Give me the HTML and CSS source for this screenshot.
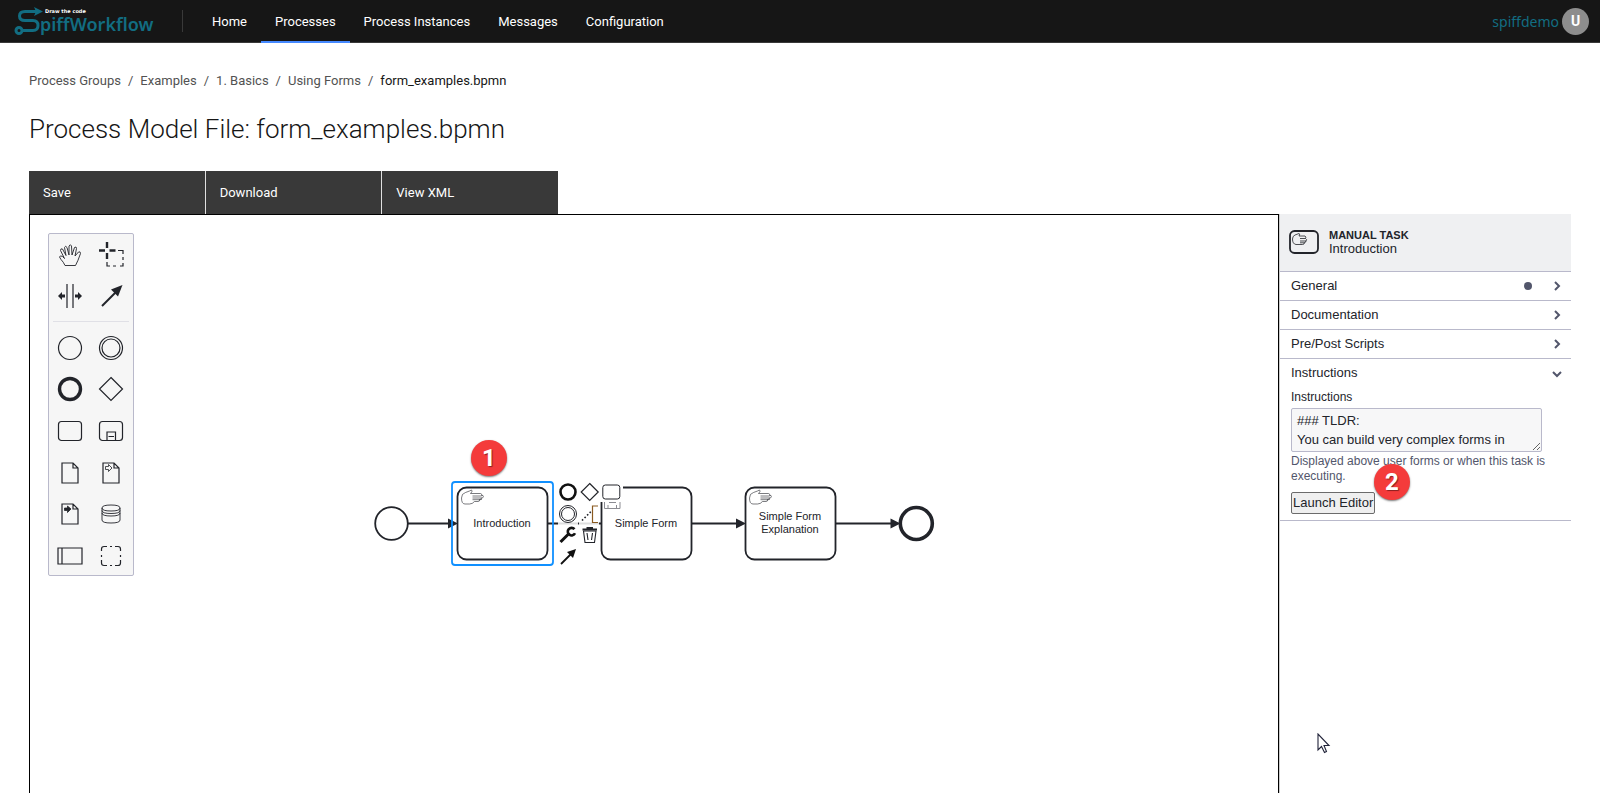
FILE: index.html
```
<!DOCTYPE html>
<html lang="en">
<head>
<meta charset="utf-8">
<title>SpiffWorkflow - form_examples.bpmn</title>
<link rel="stylesheet" href="styles.css">
</head>
<body>
<header class="topbar">
  <a class="logo" href="#" aria-label="SpiffWorkflow">
    <svg width="144" height="36" viewBox="14 3 144 36">
      <g fill="none" stroke="#126d82" stroke-width="3">
        <path d="M36 11.500H25Q19.500 11.500 19.500 16T25 20.500H33Q38 20.500 38 25.500T33 30.500H23"/>
        <circle cx="19" cy="30.500" r="3"/>
      </g>
      <path d="M34 7l9 4.500-9 4.500 2-4.500z" fill="#126d82"/>
      <text class="logo-tag" x="45" y="13">Draw the code</text>
      <text class="logo-name" x="40" y="31">piffWorkflow</text>
    </svg>
  </a>
  <nav class="nav">
    <a href="#">Home</a>
    <a href="#" class="active" aria-current="page">Processes</a>
    <a href="#">Process Instances</a>
    <a href="#">Messages</a>
    <a href="#">Configuration</a>
  </nav>
  <div class="user"><span class="user-name">spiffdemo</span><button class="avatar" type="button">U</button></div>
</header>
<main class="page">
  <nav class="crumbs" aria-label="Breadcrumb">
    <a href="#">Process Groups</a><span>/</span><a href="#">Examples</a><span>/</span><a href="#">1. Basics</a><span>/</span><a href="#">Using Forms</a><span>/</span><b>form_examples.bpmn</b>
  </nav>
  <h1 class="title">Process Model File: form_examples.bpmn</h1>
  <div class="actions">
    <button type="button">Save</button>
    <button type="button">Download</button>
    <button type="button">View XML</button>
  </div>
  <div class="editor">
    <section class="canvas" aria-label="Diagram">
      <svg class="diagram" width="960" height="400" viewBox="30 215 960 400">
        <defs>
          <symbol id="hand" viewBox="0 0 23 15" overflow="visible">
            <path d="M1 8.500Q1 4 5 3L9 1.500Q11 0 11.500 1T10 4H20Q22 4.500 21 6H22.500Q23.500 7 22 8.500H20.500L21 10H19Q19.500 12 17.500 12H14Q12 14.500 9 14.500H4.500Q1 14.500 1 8.500M12 6.500H21M12 8.500H21M12 10.200H20" fill="none" stroke="#22242a" stroke-width=".6"/>
          </symbol>
        </defs>
        <g fill="#fff" stroke="#22242a" stroke-width="1.800">
          <path d="M408 523.500H450M548 523.500H601M692 523.500H738M836 523.500H893"/>
          <circle cx="391.500" cy="523.500" r="16.300"/>
          <rect x="457.500" y="487.500" width="90" height="72" rx="9"/>
          <rect x="601.500" y="487.500" width="90" height="72" rx="9"/>
          <rect x="745.500" y="487.500" width="90" height="72" rx="9"/>
          <circle cx="916.300" cy="523.500" r="16" stroke-width="3.600"/>
        </g>
        <g fill="#22242a">
          <path d="M448 518.500L458 523.500L448 528.500z"/>
          <path d="M736 518.500L746 523.500L736 528.500z"/>
          <path d="M890.500 518.500L900.500 523.500L890.500 528.500z"/>
        </g>
        <use href="#hand" x="460.500" y="489.500" width="23" height="15"/>
        <use href="#hand" x="748.500" y="489.500" width="23" height="15"/>
        <rect x="452" y="482" width="101" height="83" rx="3" fill="none" stroke="#1090ff" stroke-width="1.800"/>
        <g class="task-label">
          <text x="502" y="527">Introduction</text>
          <text x="646" y="527">Simple Form</text>
          <text x="790" y="520">Simple Form</text>
          <text x="790" y="533">Explanation</text>
        </g>
        <g fill="#fff" fill-opacity=".85">
          <rect x="558" y="482" width="20" height="64"/>
          <rect x="579" y="482" width="22" height="20"/>
          <rect x="600" y="482" width="23" height="20" fill-opacity="1"/>
          <rect x="579" y="504" width="20" height="42"/>
        </g>
        <path d="M604.500 502V508.500H620V502M608 508.500V505M616.500 508.500V505M609 502.500H616" fill="none" stroke="#8b8c92" stroke-width="1"/>
        <g fill="none" stroke="#22242a" stroke-width="1.200">
          <circle cx="568" cy="492" r="7.500" stroke="#111" stroke-width="2.600"/>
          <path d="M589.700 483.500L598.200 492L589.700 500.500L581.200 492z"/>
          <rect x="602.800" y="485" width="17" height="14" rx="2.500" stroke-width="1"/>
          <circle cx="568" cy="514" r="8.500" stroke-width="1"/>
          <circle cx="568" cy="514" r="6.500" stroke-width="1"/>
          <path d="M598 506H592.500V522.500H598" stroke="#8a5a20"/>
          <path d="M582 520.500L591.500 511" stroke-width="1.600" stroke-dasharray="1.600 2"/>
          <path d="M583.500 531L585 542.500H594.500L596 531zM587 533L588 540M592.500 533L591.500 540" stroke-width="1.100"/>
          <path d="M582.500 529.500H597M586.500 528H593" stroke-width="1.800"/>
          <path d="M561 564L572 553" stroke="#111" stroke-width="1.800"/>
        </g>
        <path d="M576 549L573 558L567 552z" fill="#111"/>
        <path d="M560.500 542L569.500 533" stroke="#111" stroke-width="3"/>
        <path d="M574.500 529.200A3.800 3.800 0 1 0 575 533.300" fill="none" stroke="#111" stroke-width="2.600"/>
      </svg>
      <span class="badge badge-one">1</span>
      <div class="palette">
        <div class="group">
          <button type="button" aria-label="Hand tool"><svg class="thin" viewBox="0 0 26 26"><path d="M8 23.500Q6.500 20 4 17.500L2.500 15Q3 13 5.500 14.500L7.500 16.500L3.500 8.500Q3.500 6 5.500 7L9 13.500L7.500 5.500Q8.500 3 10 5.500L12 13L12 4Q13.500 1.500 14.500 4L15 13L17.500 5.500Q19.500 4 19.500 6.500L18 14L21.500 10Q23.500 9 23.500 11.500Q21 19 18.500 23.500z"/></svg></button>
          <button type="button" aria-label="Lasso tool"><svg viewBox="0 0 26 26"><path d="M9 0V6M9 11V17M1 8.500H7M11.500 8.500H17.500" stroke-width="2.400"/><path d="M20 8.500H25V12M25 15V18M25 21V24H22M18 24H15M12 24H9V20" stroke-width="1.200"/></svg></button>
          <button type="button" aria-label="Space tool"><svg viewBox="0 0 26 26"><path d="M10 1V25M16 1V25"/><path d="M4 13H8M18 13H22" stroke-width="3"/><path d="M1 13L5 9V17zM25 13L21 9V17z" fill="#22242a" stroke="none"/></svg></button>
          <button type="button" aria-label="Connect tool"><svg viewBox="0 0 26 26"><path d="M4 23L18 9" stroke-width="2"/><path d="M24.500 2L20 13.500L13 6.500z" fill="#22242a" stroke="none"/></svg></button>
        </div>
        <hr>
        <div class="group shapes">
          <button type="button" aria-label="Start event"><svg viewBox="0 0 26 26"><circle cx="13" cy="13" r="11.500"/></svg></button>
          <button type="button" aria-label="Intermediate event"><svg viewBox="0 0 26 26"><circle cx="13" cy="13" r="11.500"/><circle cx="13" cy="13" r="9"/></svg></button>
          <button type="button" aria-label="End event"><svg viewBox="0 0 26 26"><circle cx="13" cy="13" r="10.500" stroke-width="3.400"/></svg></button>
          <button type="button" aria-label="Gateway"><svg viewBox="0 0 26 26"><path d="M13 1.500L24.500 13L13 24.500L1.500 13z"/></svg></button>
          <button type="button" aria-label="Task"><svg viewBox="0 0 26 26"><rect x="1.500" y="3.500" width="23" height="19" rx="3"/></svg></button>
          <button type="button" aria-label="Sub-process"><svg viewBox="0 0 26 26"><rect x="1.500" y="3.500" width="23" height="19" rx="3"/><path d="M9 22V14H17.500V22M10.500 18.500H16"/></svg></button>
          <button type="button" aria-label="Data object"><svg viewBox="0 0 26 26"><path d="M5 3H16L21 8V23H5zM16 3V8H21"/></svg></button>
          <button type="button" aria-label="Data input"><svg viewBox="0 0 26 26"><path d="M5 3H16L21 8V23H5zM16 3V8H21"/><path d="M7.500 6.500H10.500V4.500L14 8L10.500 11.500V9.500H7.500z" stroke-width=".8"/></svg></button>
          <button type="button" aria-label="Data output"><svg viewBox="0 0 26 26"><path d="M5 3H16L21 8V23H5zM16 3V8H21"/><path d="M7.500 7H10.500V5L14 8L10.500 11.500V9.500H7.500z" fill="#22242a" stroke-width=".8"/></svg></button>
          <button type="button" aria-label="Data store"><svg class="thin" viewBox="0 0 26 26"><path d="M4 7Q4 4 13 4T22 7Q22 10 13 10T4 7V19Q4 22 13 22T22 19V7M4 9.500Q4 12.500 13 12.500T22 9.500M4 12Q4 15 13 15T22 12"/></svg></button>
          <button type="button" aria-label="Pool"><svg viewBox="0 0 26 26"><path d="M1 5H25V21H1zM5 5V21"/></svg></button>
          <button type="button" aria-label="Group"><svg viewBox="0 0 26 26"><path d="M3.500 8V6Q3.500 3.500 6 3.500H9M12 3.500H14M17 3.500H20Q22.500 3.500 22.500 6V8M22.500 12V14M22.500 17V20Q22.500 22.500 20 22.500H17M14 22.500H12M9 22.500H6Q3.500 22.500 3.500 20V17M3.500 14V12"/></svg></button>
        </div>
      </div>
    </section>
    <aside class="panel">
      <div class="panel-head">
        <svg width="30" height="24" viewBox="0 0 30 24"><rect x="1" y="1" width="28" height="22" rx="4.500" fill="none" stroke="#22242a" stroke-width="1.800"/><path d="M3.500 9Q3.500 6 6 5L10 3.500Q11.500 3.500 10 6H16Q17.500 7 16.500 8.500Q18.500 9.500 17 11Q17 12.500 15.500 12.500Q15.500 14.500 13.500 14.500H7Q3.500 14 3.500 9M11 8.500H16.500M11 11H17M11 12.800H15.500" fill="none" stroke="#22242a" stroke-width=".8"/></svg>
        <div class="panel-title"><div class="kind">MANUAL TASK</div><div class="name">Introduction</div></div>
      </div>
      <button class="row" type="button"><span>General</span><i class="dot"></i><svg class="chev" viewBox="0 0 10 10"><path d="M3 1L7 5L3 9"/></svg></button>
      <button class="row" type="button"><span>Documentation</span><svg class="chev" viewBox="0 0 10 10"><path d="M3 1L7 5L3 9"/></svg></button>
      <button class="row" type="button"><span>Pre/Post Scripts</span><svg class="chev" viewBox="0 0 10 10"><path d="M3 1L7 5L3 9"/></svg></button>
      <div class="open">
        <button class="row" type="button" aria-expanded="true"><span>Instructions</span><svg class="chev" viewBox="0 0 10 10"><path d="M1 3L5 7L9 3"/></svg></button>
        <div class="fields">
          <label for="instructions">Instructions</label>
          <textarea id="instructions" rows="2">### TLDR:
You can build very complex forms in</textarea>
          <p class="help">Displayed above user forms or when this task is executing.</p>
          <button class="launch" type="button">Launch Editor</button>
          <span class="badge badge-two">2</span>
        </div>
      </div>
      <svg class="cursor" width="14" height="21" viewBox="0 0 14 21"><path d="M1 1V17L4.500 13.500L7.500 19.500L9.500 18.500L7 12.500H12z" fill="#fff" stroke="#22243a" stroke-width="1.100"/></svg>
    </aside>
  </div>
</main>
</body>
</html>
```
FILE: styles.css
```
* { box-sizing: border-box; }
body { margin: 0; height: 100vh; display: flex; flex-direction: column; overflow: hidden; background: #fff; color: #161616; font-family: Roboto, "Liberation Sans", sans-serif; font-size: 13px; }
button { margin: 0; padding: 0; border: 0; background: none; font: inherit; color: inherit; text-align: left; }
a { color: inherit; text-decoration: none; }

.topbar { display: flex; align-items: stretch; height: 43px; background: #161616; border-bottom: 1px solid #393939; flex: none; }
.logo { display: flex; align-items: center; padding-left: 14px; }
.logo-tag { font: bold 5px "DejaVu Sans", sans-serif; fill: #fff; }
.logo-name { font: 600 18px "Noto Sans", "Open Sans", sans-serif; fill: #126d82; }
.nav { display: flex; margin-left: 24px; }
.nav::before { content: ""; width: 1px; height: 22px; margin: 10px 15px 0 0; background: #393939; }
.nav a { display: flex; align-items: center; padding: 2px 14px 0; margin-bottom: -1px; border-bottom: 2px solid transparent; color: #fff; }
.nav .active { border-color: #4589ff; }
.user { display: flex; align-items: center; gap: 3px; margin-left: auto; padding-right: 11px; }
.user-name { color: #126d82; font: 14px "Noto Sans", sans-serif; }
.avatar { width: 27px; height: 27px; border-radius: 50%; background: #8d8d8d; color: #fff; font-size: 14px; font-weight: 700; text-align: center; }

.page { flex: 1; min-height: 0; display: flex; flex-direction: column; padding: 29px 29px 0; }
.crumbs { display: flex; gap: 7px; line-height: 18px; color: #525252; }
.crumbs b { font-weight: 400; color: #161616; }
.title { margin: 22px 0 25px; font-size: 26px; line-height: 34px; font-weight: 300; }
.actions { display: flex; gap: 1px; width: 529px; background: #e0e0e0; }
.actions button { flex: 1; height: 43px; padding: 0 14px; background: #393939; color: #fff; }

.editor { flex: 1; min-height: 0; display: flex; }
.canvas { flex: 1; min-width: 0; position: relative; border: 1px solid #000; border-bottom: 0; }
.diagram { position: absolute; left: 0; top: 0; }
.task-label { font: 11px "Liberation Sans", Arial, sans-serif; fill: #22242a; text-anchor: middle; }
.badge { position: absolute; width: 36px; height: 36px; border-radius: 50%; background: #f43b3b; color: #fff; font: bold 24px/36px Roboto, "Liberation Sans", sans-serif; text-align: center; text-shadow: 1px 1px 1px #8a2020; box-shadow: 0 1px 2px #777; }
.badge-one { left: 441px; top: 225px; }
.palette { position: absolute; left: 18px; top: 18px; display: flex; flex-direction: column; width: 86px; height: 343px; background: #f6f6f6; border: 1px solid #b9b9cb; border-radius: 2px; }
.group { display: grid; grid-template-columns: 41px 41px; grid-auto-rows: 41px; }
.shapes { flex: 1; grid-auto-rows: 1fr; margin-bottom: -2px; }
.group button { display: grid; place-items: center; }
.group svg { width: 26px; height: 26px; fill: none; stroke: #22242a; stroke-width: 1.2; }
.group .thin { stroke-width: 0.9; }
.palette hr { width: 76px; margin: 5px 4px; border: 0; border-top: 1px solid #e0e0e6; }

.panel { position: relative; width: 292px; border-left: 1px solid #ccc; font: 13px/15px "Liberation Sans", Arial, sans-serif; color: #22242a; }
.panel-head { display: flex; align-items: center; gap: 10px; height: 58px; padding: 0 9px 2px; background: #eff0f2; border-bottom: 1px solid #b9b9cb; }
.panel-title { padding-top: 2px; }
.kind { font-size: 11px; line-height: 13px; font-weight: 700; }
.name { line-height: 14px; }
.row { display: flex; align-items: center; gap: 20px; width: 100%; height: 29px; padding: 0 9px 0 11px; border-bottom: 1px solid #b9b9cb; }
.row span { flex: 1; padding-bottom: 2px; }
.dot { width: 8px; height: 8px; border-radius: 50%; background: #52566b; }
.chev { width: 10px; height: 10px; fill: none; stroke: #52566b; stroke-width: 2; }
.open { border-bottom: 1px solid #b9b9cb; }
.open .row { border-bottom: 0; }
.fields { position: relative; display: flex; flex-direction: column; align-items: flex-start; padding: 2px 29px 6px 11px; }
.fields label { font-size: 12px; line-height: 15px; }
.fields textarea { width: 100%; height: 44px; margin: 3px 0 2px; padding: 2px 5px; border: 1px solid #b9b9cb; border-radius: 2px; background: #f7f7f8; color: #22242a; font: 13px/19px "Liberation Sans", Arial, sans-serif; overflow: hidden; resize: vertical; }
.help { margin: 0 -16px 8px 0; color: #52566b; font-size: 12px; line-height: 15px; }
.launch { padding: 2px 1px; border: 1px solid #6b6b6b; border-radius: 2px; background: #efefef; line-height: 16px; }
.badge-two { left: 94px; top: 76px; }
.cursor { position: absolute; left: 37px; top: 519px; }
```
